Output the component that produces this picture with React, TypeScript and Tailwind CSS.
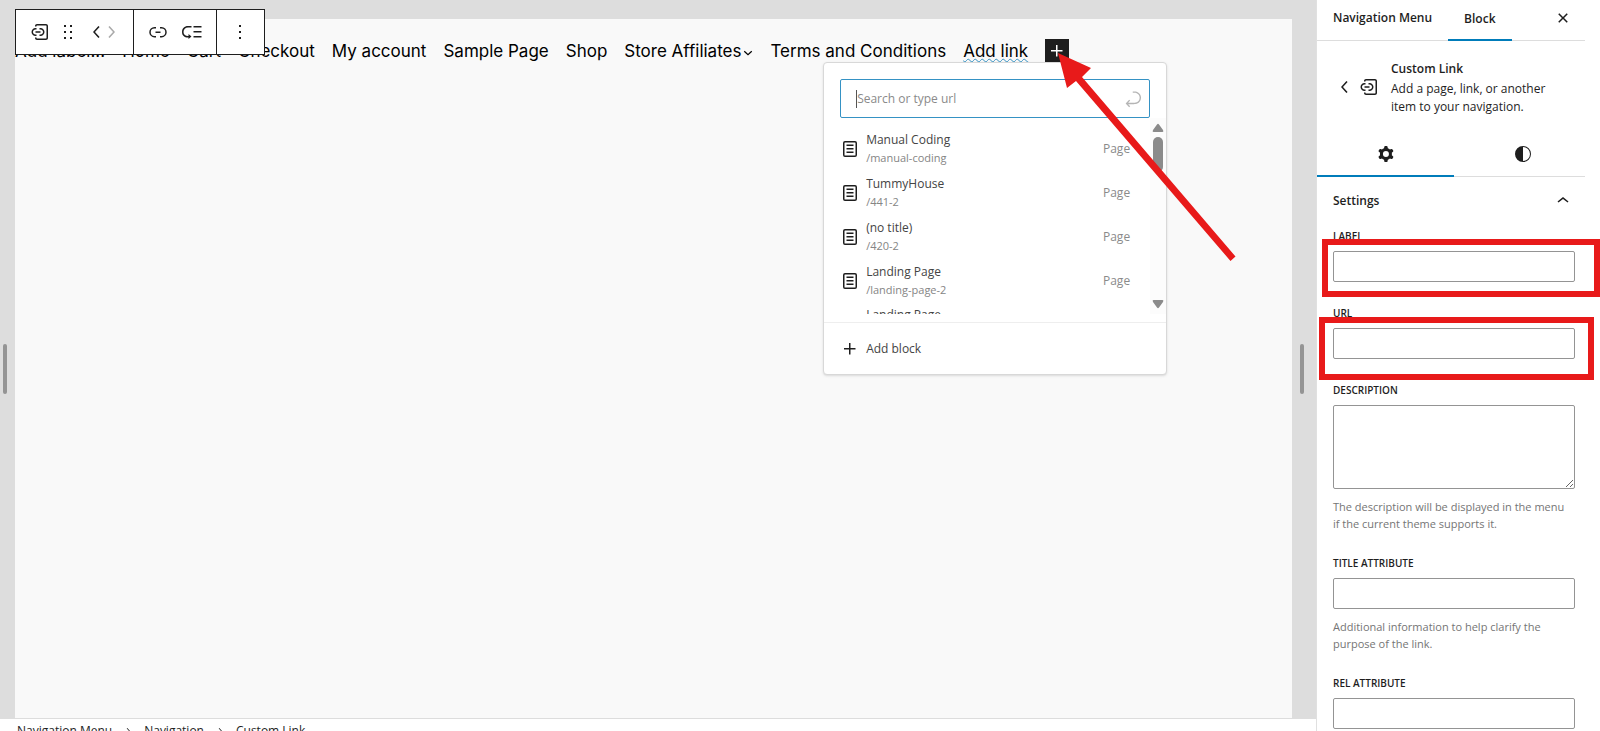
import React from 'react';

const icons = {
  customLink:
    'M12.5 14.5h-1V16h1c2.2 0 4-1.8 4-4s-1.8-4-4-4h-1v1.5h1c1.4 0 2.5 1.1 2.5 2.5s-1.1 2.5-2.5 2.5zm-4 1.5v-1.5h-1C6.1 14.5 5 13.4 5 12s1.1-2.5 2.5-2.5h1V8h-1c-2.2 0-4 1.8-4 4s1.8 4 4 4h1zm-1-3.2h5v-1.5h-5v1.5zM18 4H9c-1.1 0-2 .9-2 2v.5h1.5V6c0-.3.2-.5.5-.5h9c.3 0 .5.2.5.5v12c0 .3-.2.5-.5.5H9c-.3 0-.5-.2-.5-.5v-.5H7v.5c0 1.1.9 2 2 2h9c1.1 0 2-.9 2-2V6c0-1.1-.9-2-2-2z',
  drag: 'M8 7h2V5H8v2zm0 6h2v-2H8v2zm0 6h2v-2H8v2zm6-14v2h2V5h-2zm0 8h2v-2h-2v2zm0 6h2v-2h-2v2z',
  left: 'M14.6 7l-1.2-1L8 12l5.4 6 1.2-1-4.6-5z',
  right: 'M10.6 6L9.4 7l4.6 5-4.6 5 1.2 1 5.4-6z',
  link: 'M10 17.389H8.444A5.194 5.194 0 1 1 8.444 7H10v1.5H8.444a3.694 3.694 0 0 0 0 7.389H10v1.5ZM14 7h1.556a5.194 5.194 0 0 1 0 10.39H14v-1.5h1.556a3.694 3.694 0 0 0 0-7.39H14V7Zm-4.5 6h5v-1.5h-5V13Z',
  submenu:
    'M2 12c0 3.6 2.4 5.5 6 5.5h.5V19l3-2.5-3-2.5v2H8c-2.5 0-4.5-1.5-4.5-4s2-4.5 4.5-4.5h3.5V6H8c-3.6 0-6 2.4-6 6zm19.5-1h-8v1.5h8V11zm0 5h-8v1.5h8V16zm0-10h-8v1.5h8V6z',
  more: 'M13 19h-2v-2h2v2zm0-6h-2v-2h2v2zm0-6h-2V5h2v2z',
  close:
    'M12 13.06l3.712 3.713 1.061-1.06L13.061 12l3.712-3.712-1.06-1.06L12 10.938 8.288 7.227l-1.061 1.06L10.939 12l-3.712 3.712 1.06 1.061L12 13.061z',
  cog: 'M10.289 4.836A1 1 0 0111.275 4h1.306a1 1 0 01.987.836l.244 1.466c.787.26 1.503.679 2.108 1.218l1.393-.522a1 1 0 011.216.437l.653 1.13a1 1 0 01-.23 1.273l-1.148.944a6.025 6.025 0 010 2.435l1.149.946a1 1 0 01.23 1.272l-.653 1.13a1 1 0 01-1.216.437l-1.394-.522c-.605.54-1.32.958-2.108 1.218l-.244 1.466a1 1 0 01-.987.836h-1.306a1 1 0 01-.986-.836l-.244-1.466a5.995 5.995 0 01-2.108-1.218l-1.394.522a1 1 0 01-1.217-.436l-.653-1.131a1 1 0 01.23-1.272l1.149-.946a6.026 6.026 0 010-2.435l-1.148-.944a1 1 0 01-.23-1.272l.653-1.131a1 1 0 011.217-.437l1.393.522a5.994 5.994 0 012.108-1.218l.244-1.466zM14.929 12a3 3 0 11-6 0 3 3 0 016 0z',
  styles: 'M20 12a8 8 0 1 1-16 0 8 8 0 0 1 16 0Zm-1 0a7 7 0 0 1-7 7v-14a7 7 0 0 1 7 7Z',
  up: 'M6.5 12.4L12 8l5.5 4.4-.9 1.2L12 10l-4.5 3.6-1-1.2z',
  page: 'M15.5 7.5h-7V9h7V7.5Zm-7 3.5h7v1.5h-7V11Zm7 3.5h-7V16h7v-1.5ZM17 4H7a2 2 0 0 0-2 2v12a2 2 0 0 0 2 2h10a2 2 0 0 0 2-2V6a2 2 0 0 0-2-2ZM7 5.5h10a.5.5 0 0 1 .5.5v12a.5.5 0 0 1-.5.5H7a.5.5 0 0 1-.5-.5V6a.5.5 0 0 1 .5-.5Z',
  plus: 'M11 12.5V17.5H12.5V12.5H17.5V11H12.5V6H11V11H6V12.5H11Z',
  enter:
    'm6.734 16.106 2.176-2.38-1.093-1.028-3.846 4.158 3.846 4.158 1.093-1.028-2.176-2.38h2.811c1.125 0 2.25.03 3.374 0 1.428-.001 3.362-.25 4.963-1.277 1.66-1.065 2.868-2.906 2.868-5.859 0-2.479-1.327-4.896-3.65-5.93-1.82-.813-3.044-.8-4.806-.788l-.567.002v1.5c.184 0 .368 0 .553-.002 1.82-.007 2.704-.014 4.21.657 1.854.827 2.76 2.657 2.76 4.561 0 2.472-.973 3.824-2.178 4.596-1.258.807-2.864 1.04-4.163 1.04h-.02c-1.115.03-2.229 0-3.344 0H6.734Z',
};

const Icon: React.FC<{ name: keyof typeof icons; className?: string; viewBox?: string }> = ({
  name,
  className = 'size-6',
  viewBox = '0 0 24 24',
}) => (
  <svg className={`shrink-0 ${className}`} viewBox={viewBox} fill="currentColor" aria-hidden="true">
    <path fillRule="evenodd" clipRule="evenodd" d={icons[name]} />
  </svg>
);

const pages = [
  { title: 'Manual Coding', url: '/manual-coding' },
  { title: 'TummyHouse', url: '/441-2' },
  { title: '(no title)', url: '/420-2' },
  { title: 'Landing Page', url: '/landing-page-2' },
];

const BlockToolbar = () => (
  <div role="toolbar" aria-label="Block tools" className="absolute left-[15px] top-[9px] z-10 flex h-[46px] divide-x divide-[#1e1e1e] border border-[#1e1e1e] bg-white">
    <div className="flex items-center pl-3 pr-4">
      <button aria-label="Custom Link"><Icon name="customLink" /></button>
      <button aria-label="Drag" className="ml-1"><Icon name="drag" /></button>
      <button aria-label="Move left" className="ml-[11px]"><Icon name="left" className="h-6 w-3" viewBox="6 0 12 24" /></button>
      <button aria-label="Move right" disabled className="ml-0.5 text-[#aaa]"><Icon name="right" className="h-6 w-3" viewBox="6 0 12 24" /></button>
    </div>
    <div className="flex items-center gap-[10px] px-3">
      <button aria-label="Link"><Icon name="link" /></button>
      <button aria-label="Add submenu"><Icon name="submenu" /></button>
    </div>
    <div className="flex items-center pl-[11px] pr-3">
      <button aria-label="Options"><Icon name="more" /></button>
    </div>
  </div>
);

const LinkPopover = () => (
  <div className="absolute -left-[222px] top-[23px] w-[344px] rounded-sm border border-[#d8d8d8] bg-white font-['Open_Sans',sans-serif] text-xs text-[#444] shadow-sm">
    <div className="mx-4 mt-4 flex h-[39px] items-center rounded-xs border border-[#3592c4] pl-[15px] pr-[5px]">
      <span className="h-[18px] w-px bg-[#555]" />
      <input aria-label="Search or type url" placeholder="Search or type url" className="min-w-0 flex-1 outline-none placeholder:text-[#8a8a8a]" />
      <button aria-label="Submit" className="text-[#b5b5b5]"><Icon name="enter" className="size-[22px]" /></button>
    </div>
    <div className="flex h-[196px]">
      <ul className="min-w-0 flex-1 overflow-hidden pt-[9px]">
        {pages.map((p) => (
          <li key={p.url}>
            <button className="flex h-11 w-full items-center pl-[14px] pr-5 text-left">
              <Icon name="page" className="size-6 text-[#1e1e1e]" />
              <span className="ml-1 flex-1">
                <span className="block leading-[18px]">{p.title}</span>
                <span className="block text-[11px] leading-[18px] text-[#858585]">{p.url}</span>
              </span>
              <span className="text-[#8a8a8a]">Page</span>
            </button>
          </li>
        ))}
        <li className="pl-[42px] pt-[3px] leading-[18px]">Landing Page</li>
      </ul>
      <div className="flex w-4 flex-col items-center bg-[#fcfcfc] py-[5px] text-[#8b8b8b]">
        <svg className="h-2.5 w-3" viewBox="0 0 12 10" fill="currentColor"><path d="M5 1.5Q6 0 7 1.5L11 7Q12 9 10.500 9H1.500Q0 9 1 7Z" /></svg>
        <div className="mt-1 h-[35px] w-2.5 rounded-full bg-current" />
        <svg className="mt-auto h-2.5 w-3" viewBox="0 0 12 10" fill="currentColor"><path d="M5 8.500Q6 10 7 8.500L11 3Q12 1 10.500 1H1.500Q0 1 1 3Z" /></svg>
      </div>
    </div>
    <div className="mt-2 border-t border-[#eee] pb-[13px] pl-[14px] pt-[14px]">
      <button className="flex items-center gap-1">
        <Icon name="plus" className="size-6 text-[#1e1e1e]" />
        Add block
      </button>
    </div>
  </div>
);

const DragHandle = () => <div className="h-[50px] w-1 rounded-full bg-[#949494]" />;

const Canvas = () => (
  <div className="relative flex flex-1 bg-[#ddd] pt-[19px]">
    <div className="flex w-[15px] shrink-0 items-center pl-[3px]"><DragHandle /></div>
    <main className="min-w-0 flex-1 bg-[#f9f9f9]">
      <nav className="flex h-16 items-center gap-[17px] whitespace-nowrap font-['Inter',sans-serif] text-[17px] text-black">
        <a href="#">Add label...</a>
        <a href="#">Home</a>
        <a href="#">Cart</a>
        <a href="#">Checkout</a>
        <a href="#">My account</a>
        <a href="#">Sample Page</a>
        <a href="#">Shop</a>
        <a href="#" className="flex items-center gap-0.5">
          Store Affiliates
          <svg className="mt-1 size-2.5" viewBox="0 0 12 12" fill="none" stroke="currentColor" strokeWidth="1.5"><path d="M1.500 4 6 8l4.500-4" /></svg>
        </a>
        <a href="#">Terms and Conditions</a>
        <a href="#" className="underline decoration-[#3592c4] decoration-wavy decoration-1 underline-offset-1">Add link</a>
        <div className="relative">
          <button aria-label="Add block" className="flex size-6 items-center justify-center bg-[#1e1e1e] text-white"><Icon name="plus" /></button>
          <LinkPopover />
        </div>
      </nav>
    </main>
    <div className="flex w-6 shrink-0 items-center pl-2"><DragHandle /></div>
    <BlockToolbar />
  </div>
);

const inputClass = 'block w-full rounded-xs border border-[#949494] bg-white px-2 outline-none';

const Field: React.FC<{ id: string; label: string; help?: string; multiline?: boolean; marker?: string }> = ({
  id,
  label,
  help,
  multiline,
  marker,
}) => (
  <div>
    <label htmlFor={id} className="mb-[7px] block text-[10px] font-semibold uppercase leading-4">{label}</label>
    <div className="relative">
      {multiline ? (
        <textarea id={id} className={`h-[84px] resize-y ${inputClass}`} />
      ) : (
        <input id={id} type="text" className={`h-[31px] ${inputClass}`} />
      )}
      {marker && <div className={`pointer-events-none absolute border-6 border-[#e81a1a] ${marker}`} />}
    </div>
    {help && <p className="mt-[9px] pr-2 text-[11px] leading-[17px] text-[#757575]">{help}</p>}
  </div>
);

const Sidebar = () => (
  <aside className="w-[284px] shrink-0 border-l border-[#e0e0e0] bg-white pr-[15px]">
    <div className="flex h-[41px] items-stretch border-b border-[#ddd] font-semibold">
      <button className="px-4 pb-1">Navigation Menu</button>
      <button className="-mb-px border-b-2 border-[#007cba] px-4 pb-0.5">Block</button>
      <button aria-label="Close settings" className="ml-auto mr-[10px] pb-1"><Icon name="close" /></button>
    </div>
    <div className="flex items-center px-4 pb-4 pt-[17px]">
      <button aria-label="Back" className="flex w-6 justify-center"><Icon name="left" /></button>
      <Icon name="customLink" />
      <div className="ml-[10px] flex-1">
        <h2 className="font-semibold leading-[22px]">Custom Link</h2>
        <p className="leading-[18px]">Add a page, link, or another item to your navigation.</p>
      </div>
    </div>
    <div className="flex h-[45px] overflow-hidden">
      <button aria-label="Settings" className="flex w-[137px] shrink-0 items-center justify-center border-b-2 border-[#007cba]"><Icon name="cog" /></button>
      <button aria-label="Styles" className="flex w-[137px] shrink-0 items-center justify-center border-b border-[#ddd]"><Icon name="styles" /></button>
    </div>
    <button className="flex h-12 w-full items-center justify-between pl-4 pr-[10px] font-semibold">
      Settings
      <Icon name="up" />
    </button>
    <div className="flex flex-col gap-[23px] pl-4 pr-[10px] pt-[3px]">
      <Field id="label" label="Label" marker="-left-[11px] -right-[25px] -top-3 -bottom-[15px]" />
      <Field id="url" label="URL" marker="-left-[14px] -right-[19px] -top-[11px] -bottom-[21px]" />
      <Field id="description" label="Description" multiline help="The description will be displayed in the menu if the current theme supports it." />
      <Field id="title" label="Title attribute" help="Additional information to help clarify the purpose of the link." />
      <Field id="rel" label="Rel attribute" />
    </div>
  </aside>
);

export default function App() {
  return (
    <div className="relative flex h-screen overflow-hidden bg-white font-['Open_Sans',sans-serif] text-xs text-[#1e1e1e]">
      <div className="flex min-w-0 flex-1 flex-col">
        <Canvas />
        <footer className="h-[13px] shrink-0 overflow-hidden border-t border-[#ddd] bg-white">
          <ol className="flex items-center gap-[10px] pl-[17px] pt-[2px] leading-5">
            <li>Navigation Menu</li>
            <li><Icon name="right" className="size-3" /></li>
            <li>Navigation</li>
            <li><Icon name="right" className="size-3" /></li>
            <li>Custom Link</li>
          </ol>
        </footer>
      </div>
      <Sidebar />
      <svg className="pointer-events-none absolute left-[1056px] top-[51px] h-[212px] w-[182px]" viewBox="1056 51 182 212" fill="#e81a1a" aria-hidden="true">
        <path d="M1058 53 1091 68 1082 77 1235.500 256.500 1230.500 261 1076 81 1067 88Z" />
      </svg>
    </div>
  );
}
